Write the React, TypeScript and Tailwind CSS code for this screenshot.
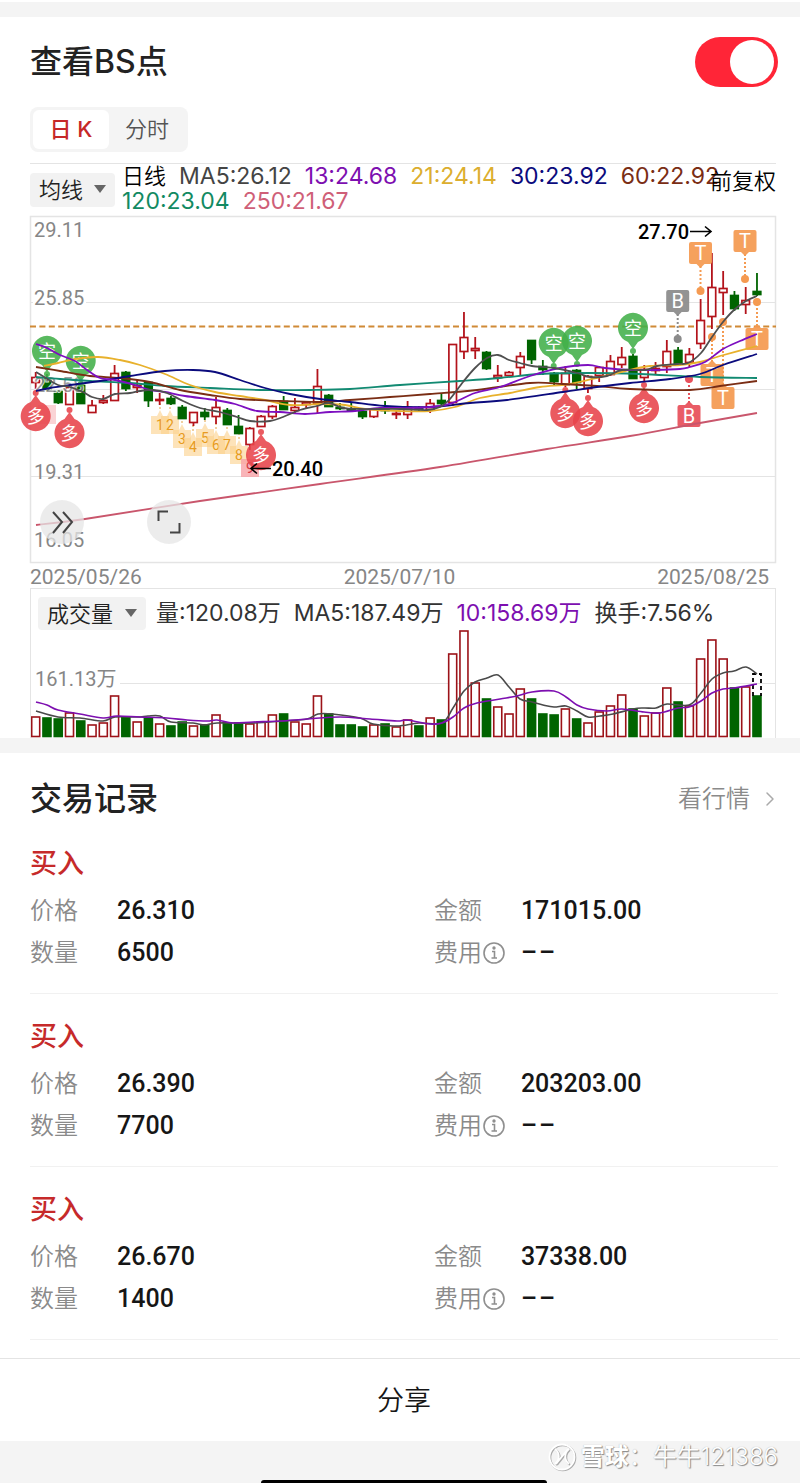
import { useState } from "react";
import { FiChevronRight } from "react-icons/fi";

type Candle = [
  kind: "u" | "d",
  high: number,
  top: number,
  bottom: number,
  low: number,
  volTop: number,
];
type Point = [number, number];

const STEP = 11.27;
const xAt = (i: number) => 35.7 + i * STEP;

const RED = "#b3131b";
const GREEN = "#006400";

const CANDLES: Candle[] = [
  ["u", 372, 377, 383, 389, 717],
  ["d", 374, 378, 390, 391, 718],
  ["d", 390, 391, 403, 404, 719],
  ["u", 384, 387, 405, 405, 713],
  ["d", 384, 385, 404, 404, 721],
  ["u", 400, 405, 413, 413, 725],
  ["u", 395, 400, 403, 404, 723],
  ["u", 365, 373, 401, 401, 696],
  ["d", 371, 372, 389, 391, 717],
  ["u", 380, 385, 388, 393, 722],
  ["d", 381, 382, 401, 407, 718],
  ["u", 393, 399, 401, 405, 724],
  ["d", 396, 398, 404, 405, 726],
  ["d", 405, 407, 419, 419, 722],
  ["u", 412, 412, 423, 426, 726],
  ["d", 408, 412, 417, 420, 725],
  ["u", 397, 407, 417, 424, 715],
  ["d", 408, 410, 425, 425, 723],
  ["d", 415, 426, 434, 434, 723],
  ["u", 427, 428, 445, 450, 724],
  ["u", 415, 416, 427, 427, 722],
  ["u", 405, 406, 417, 419, 715],
  ["d", 396, 401, 410, 410, 714],
  ["u", 398, 407, 411, 413, 722],
  ["u", 401, 402, 405, 408, 724],
  ["u", 369, 386, 404, 413, 696],
  ["d", 394, 395, 407, 407, 714],
  ["d", 403, 407, 409, 410, 725],
  ["d", 403, 409, 411, 412, 725],
  ["d", 410, 411, 417, 419, 727],
  ["u", 408, 409, 417, 418, 725],
  ["d", 401, 409, 411, 414, 724],
  ["u", 411, 413, 415, 419, 727],
  ["u", 401, 407, 415, 419, 720],
  ["d", 406, 407, 410, 411, 726],
  ["u", 399, 403, 410, 413, 718],
  ["d", 394, 400, 404, 405, 720],
  ["u", 344, 344, 403, 406, 654],
  ["u", 312, 337, 352, 359, 631],
  ["u", 337, 348, 351, 359, 683],
  ["d", 351, 352, 369, 370, 699],
  ["u", 365, 375, 378, 382, 707],
  ["u", 371, 372, 376, 376, 714],
  ["u", 352, 356, 368, 375, 689],
  ["d", 340, 340, 360, 364, 699],
  ["d", 360, 366, 370, 375, 714],
  ["d", 372, 373, 382, 386, 715],
  ["u", 366, 373, 385, 387, 709],
  ["d", 369, 370, 383, 389, 719],
  ["u", 375, 376, 389, 393, 723],
  ["u", 366, 367, 376, 382, 712],
  ["u", 355, 361, 375, 376, 706],
  ["u", 347, 357, 365, 368, 695],
  ["d", 354, 356, 379, 379, 709],
  ["u", 365, 369, 378, 381, 716],
  ["u", 362, 368, 371, 374, 713],
  ["u", 340, 351, 367, 373, 688],
  ["d", 347, 350, 364, 366, 702],
  ["u", 348, 354, 363, 367, 706],
  ["u", 299, 320, 344, 349, 659],
  ["u", 253, 287, 317, 329, 640],
  ["u", 271, 288, 293, 315, 659],
  ["d", 291, 295, 309, 311, 688],
  ["u", 287, 300, 305, 314, 687],
  ["d", 273, 291, 295, 296, 696],
];

const MA_LINES: { color: string; points: Point[] }[] = [
  {
    color: "#128a72",
    points: [[36, 377], [60, 379], [90, 381], [130, 383], [165, 386], [210, 388], [260, 390], [310, 390], [350, 389], [400, 385], [460, 381], [500, 378], [540, 374], [590, 373], [640, 374], [700, 377], [757, 378]],
  },
  {
    color: "#c9566c",
    points: [[36, 525], [85, 519], [200, 501], [320, 484], [440, 467], [547, 449], [630, 436], [700, 423], [757, 413]],
  },
  {
    color: "#e8b12c",
    points: [[44, 366], [58, 363], [75, 359], [98, 357], [120, 360], [140, 365], [165, 374], [190, 385], [215, 392], [240, 396], [265, 400], [290, 405], [320, 404], [345, 405], [365, 409], [400, 411], [430, 411], [455, 407], [480, 398], [510, 393], [540, 387], [570, 384], [600, 377], [625, 371], [650, 366], [680, 365], [700, 362], [720, 356], [757, 346]],
  },
  {
    color: "#7a2d14",
    points: [[36, 367], [60, 371], [90, 376], [120, 378], [150, 382], [180, 390], [210, 395], [240, 399], [280, 401], [320, 402], [350, 400], [390, 397], [430, 394], [477, 390], [530, 383], [563, 384], [597, 386], [630, 389], [690, 390], [720, 386], [757, 381]],
  },
  {
    color: "#0b0b7d",
    points: [[36, 391], [50, 388], [70, 385], [100, 381], [130, 376], [165, 371], [193, 370], [215, 372], [240, 380], [265, 388], [290, 394], [320, 399], [350, 402], [385, 406], [430, 407], [470, 403], [507, 400], [563, 392], [597, 387], [630, 383], [670, 379], [700, 374], [723, 365], [757, 354]],
  },
  {
    color: "#7d0fc0",
    points: [[36, 344], [47, 348], [60, 355], [75, 361], [87, 370], [100, 378], [115, 380], [135, 385], [150, 390], [165, 392], [185, 396], [215, 400], [235, 404], [257, 411], [280, 412], [305, 414], [330, 412], [355, 411], [380, 408], [410, 408], [440, 406], [455, 402], [475, 393], [500, 387], [530, 376], [560, 368], [588, 365], [605, 368], [630, 370], [655, 370], [680, 369], [690, 367], [705, 362], [723, 349], [740, 341], [757, 334]],
  },
  {
    color: "#4f4f4f",
    points: [[36, 372], [46, 378], [58, 385], [70, 387], [83, 392], [92, 397], [103, 399], [115, 394], [130, 393], [140, 391], [153, 390], [167, 393], [183, 401], [200, 408], [220, 412], [237, 417], [250, 421], [270, 421], [283, 417], [300, 410], [317, 406], [329, 403], [343, 408], [360, 409], [400, 409], [427, 410], [440, 407], [450, 399], [463, 382], [475, 368], [487, 358], [498, 355], [509, 360], [520, 363], [532, 366], [554, 368], [577, 373], [590, 377], [607, 376], [622, 370], [645, 370], [657, 366], [677, 364], [688, 363], [701, 353], [712, 337], [723, 322], [734, 310], [746, 301], [757, 296]],
  },
];

const VOL_MA5: Point[] = [[36, 711], [58, 717], [80, 718], [103, 721], [115, 717], [137, 717], [148, 716], [160, 716], [171, 722], [193, 723], [205, 725], [217, 723], [253, 723], [283, 721], [307, 719], [318, 714], [332, 714], [360, 718], [373, 724], [397, 726], [419, 723], [442, 723], [453, 708], [464, 691], [475, 682], [487, 678], [498, 675], [509, 687], [520, 699], [532, 702], [543, 705], [554, 707], [566, 706], [577, 711], [588, 717], [600, 716], [613, 714], [633, 709], [644, 708], [656, 708], [667, 704], [689, 705], [701, 693], [712, 679], [723, 673], [734, 671], [746, 667], [757, 674]];
const VOL_MA10: Point[] = [[36, 702], [47, 705], [58, 710], [80, 714], [103, 718], [117, 716], [140, 717], [167, 718], [187, 720], [207, 721], [217, 720], [233, 723], [253, 722], [280, 721], [307, 719], [340, 717], [370, 719], [397, 721], [407, 720], [430, 724], [442, 723], [453, 717], [464, 708], [477, 703], [500, 699], [517, 696], [532, 692], [554, 691], [566, 697], [577, 705], [588, 709], [607, 711], [622, 709], [644, 712], [660, 713], [678, 708], [689, 707], [701, 701], [712, 693], [723, 689], [734, 688], [757, 684]];

const COUNTS = [
  [160, 425], [170, 425], [182, 439], [193, 447], [205, 438], [216, 445], [227, 445], [239, 455],
];

const SHORT_PINS = [[47, 351], [80.7, 361], [553.7, 343], [577, 341], [633, 328]];
const LONG_PINS = [[35.7, 416], [69.5, 433], [261, 455], [565.3, 413], [588, 421], [644, 408]];

const TRADES = [
  { price: "26.310", amount: "171015.00", qty: "6500" },
  { price: "26.390", amount: "203203.00", qty: "7700" },
  { price: "26.670", amount: "37338.00", qty: "1400" },
];

const FONT = "font-['Inter','Noto_Sans_CJK_SC',sans-serif]";
const NUM = "font-['Roboto','Noto_Sans_CJK_SC',sans-serif]";

// Catmull-Rom spline through the points
function smooth(p: Point[]) {
  let d = `M${p[0][0]} ${p[0][1]}`;
  for (let i = 0; i < p.length - 1; i++) {
    const a = p[i - 1] ?? p[i];
    const b = p[i];
    const c = p[i + 1];
    const e = p[i + 2] ?? c;
    d += `C${b[0] + (c[0] - a[0]) / 6} ${b[1] + (c[1] - a[1]) / 6} ${c[0] - (e[0] - b[0]) / 6} ${c[1] - (e[1] - b[1]) / 6} ${c[0]} ${c[1]}`;
  }
  return d;
}

function Pin({ x, y, up, color, label }: { x: number; y: number; up?: boolean; color: string; label: string }) {
  const s = up ? -1 : 1;
  return (
    <g>
      <g fill={color} opacity={0.88}>
        <path
          d={`M${x} ${y + 21 * s}L${x - 5} ${y + 14 * s}A15 15 0 1 ${up ? 0 : 1} ${x + 5} ${y + 14 * s}Z`}
        />
        <circle cx={x} cy={y + 23 * s} r={3} />
      </g>
      <text x={x} y={y + 7} textAnchor="middle" fontSize={18} fill="#fff">
        {label}
      </text>
    </g>
  );
}

function Badge({ x, y, dot, color, label }: { x: number; y: number; dot: number; color: string; label: string }) {
  const s = dot > y ? 1 : -1;
  return (
    <g>
      <line x1={x} x2={x} y1={y + 13 * s} y2={dot} stroke={color} strokeWidth={2} strokeDasharray="2 2" />
      <circle cx={x} cy={dot} r={4} fill={color} />
      <g fill={color} opacity={0.93}>
        <rect x={x - 11.5} y={y - 11} width={23} height={22} rx={2} />
        <path d={`M${x - 4} ${y + 11 * s}h8l-4 ${4 * s}z`} />
      </g>
      <text x={x} y={y + 7} textAnchor="middle" fontSize={20} fill="#fff">
        {label}
      </text>
    </g>
  );
}

function PriceChart() {
  return (
    <svg viewBox="30 216 746 348" className={`block w-full overflow-visible font-normal ${NUM}`}>
      <g stroke="#e4e4e4" fill="none">
        <rect x={30.5} y={216.5} width={745} height={346} strokeWidth={1.5} />
        <path d="M30 302.5H776M30 389.5H776M30 476.5H776" />
      </g>
      <g fontSize={20} fill="#868686">
        <rect x={33} y={292} width={53} height={20} fill="#fff" />
        <text x={34} y={237}>29.11</text>
        <text x={34} y={305}>25.85</text>
        <text x={34} y={479}>19.31</text>
        <text x={34} y={547}>16.05</text>
      </g>
      <path d="M30 326.5H776" stroke="#d08a36" strokeWidth={2} strokeDasharray="6 3.4" />
      <rect x={38} y={405} width={18} height={19} fill="#f7b5b9" opacity={0.6} />
      {COUNTS.map(([x, y], i) => (
        <g key={i}>
          <path
            d={`M${x - 9} ${y - 9}h6l3 -6l3 6h6v18h-18z`}
            fill="#fbd08a"
            opacity={0.6}
          />
          <path d={`M${x} ${y - 22}v8`} stroke="#e0a040" strokeDasharray="2 2" />
          <text x={x} y={y + 5} textAnchor="middle" fontSize={14} fill="#e79b20">
            {i + 1}
          </text>
        </g>
      ))}
      <rect x={241} y={459} width={18} height={18} fill="#f7a1a6" opacity={0.8} />
      <text x={250} y={473} textAnchor="middle" fontSize={14} fill="#d33a44">
        9
      </text>
      {CANDLES.map(([kind, high, top, bottom, low], i) => {
        const x = xAt(i);
        const up = kind === "u";
        const color = up ? RED : GREEN;
        return (
          <g key={i} stroke={color}>
            <path d={`M${x} ${high}V${top}M${x} ${bottom}V${low}`} strokeWidth={1.8} />
            <rect
              x={x - 3.8}
              y={top + 0.5}
              width={7.6}
              height={Math.max(bottom - top - 1, 1)}
              fill={up ? "#fff" : color}
              strokeWidth={1.7}
            />
          </g>
        );
      })}
      <text x={34} y={392} fontSize={20} fill="#868686" stroke="#fff" strokeWidth={2} paintOrder="stroke" opacity={0.8}>
        22.58
      </text>
      {SHORT_PINS.map(([x, y]) => (
        <Pin key={x} x={x} y={y} color="#43b04a" label="空" />
      ))}
      {LONG_PINS.map(([x, y]) => (
        <Pin key={x} x={x} y={y} up color="#e8444b" label="多" />
      ))}
      <Badge x={700.5} y={253} dot={291} color="#f59a51" label="T" />
      <Badge x={745} y={241} dot={279} color="#f59a51" label="T" />
      <Badge x={712} y={375} dot={337} color="#f59a51" label="T" />
      <Badge x={723} y={398} dot={322} color="#f59a51" label="T" />
      <Badge x={757} y={339} dot={302} color="#f59a51" label="T" />
      <Badge x={677.7} y={301} dot={339} color="#8b8b8b" label="B" />
      <Badge x={689} y={416} dot={379} color="#e8505b" label="B" />
      {MA_LINES.map((l) => (
        <path key={l.color} d={smooth(l.points)} fill="none" stroke={l.color} strokeWidth={1.8} />
      ))}
      <g fontSize={20} fontWeight={500} fill="#000">
        <text x={638} y={239}>27.70</text>
        <text x={272} y={476}>20.40</text>
      </g>
      <path
        d="M690 231.5H711M705 226.5L711 231.5L705 236.5M271 468.5H251M257 463.5L251 468.5L257 473.5"
        fill="none"
        stroke="#000"
        strokeWidth={1.6}
      />
    </svg>
  );
}

function VolumeChart() {
  return (
    <svg viewBox="31 630 744 108" className={`block w-full font-normal ${NUM}`}>
      <path d="M120 683.5H776" stroke="#e4e4e4" />
      <text x={35} y={686} fontSize={20} fill="#868686">
        161.13万
      </text>
      {CANDLES.map(([kind, , , , , top], i) => (
        <rect
          key={i}
          x={xAt(i) - 4}
          y={top}
          width={8}
          height={736.5 - top}
          fill={kind === "u" ? "#fff" : GREEN}
          stroke={kind === "u" ? "#9c1218" : GREEN}
          strokeWidth={1.6}
        />
      ))}
      <path d="M753 696V674H761V696" fill="none" stroke="#000" strokeWidth={1.8} strokeDasharray="4 3" />
      <g fill="none" strokeWidth={1.6}>
        <path d={smooth(VOL_MA5)} stroke="#4a4a4a" />
        <path d={smooth(VOL_MA10)} stroke="#7d0fb0" />
      </g>
    </svg>
  );
}

function Dropdown({ label, className }: { label: string; className: string }) {
  return (
    <div className={`relative shrink-0 ${className}`}>
      <select
        aria-label={label}
        className="h-full w-full appearance-none rounded-sm bg-[#f2f2f2] pl-[9px] text-[22px] leading-8 text-[#222]"
      >
        <option>{label}</option>
      </select>
      <svg viewBox="0 0 12 8" className="pointer-events-none absolute right-[9px] top-3 h-2 w-3">
        <path d="M0 0h12L6 8z" fill="#666" />
      </svg>
    </div>
  );
}

function InfoIcon() {
  return (
    <svg viewBox="0 0 24 24" className="h-6 w-6" fill="none" stroke="#8f8f8f" strokeWidth={1.6}>
      <circle cx={12} cy={12} r={10} />
      <path d="M10 10.5h2.5v6.5M9.5 17h5.5" />
      <circle cx={12} cy={7} r={0.9} fill="#8f8f8f" />
    </svg>
  );
}

function Field({ label, value, info }: { label: string; value: string; info?: boolean }) {
  return (
    <div className="flex items-center">
      <dt className="flex w-[87px] shrink-0 items-center text-2xl leading-[42px] text-[#8a8a8a]">
        {label}
        {info && (
          <button aria-label="费用说明">
            <InfoIcon />
          </button>
        )}
      </dt>
      <dd className={`text-[25px] font-medium leading-[42px] text-[#161616] ${NUM}`}>
        {value === "--" ? (
          <span className="flex gap-[2px]" aria-label="--">
            <span aria-hidden="true">–</span>
            <span aria-hidden="true">–</span>
          </span>
        ) : (
          value
        )}
      </dd>
    </div>
  );
}

export default function App() {
  const [showBS, setShowBS] = useState(true);
  const [tab, setTab] = useState("day");

  return (
    <div className={`w-full bg-white font-[350] text-[#222] ${FONT}`}>
      <div className="mt-[2px] h-[15px] bg-[#f4f4f4]" />

      {/* BS chart */}
      <section className="pl-[30px] pr-6">
        <label className="-mr-[2px] flex h-[90px] items-center justify-between">
          <span className="text-[32px] font-medium leading-10">查看BS点</span>
          <input
            type="checkbox"
            role="switch"
            checked={showBS}
            onChange={(e) => setShowBS(e.target.checked)}
            className="relative h-[50px] w-[83px] appearance-none rounded-full bg-[#ddd] before:absolute before:left-1 before:top-[3px] before:h-11 before:w-11 before:rounded-full before:bg-white checked:bg-[#ff2537] checked:before:left-[35px]"
          />
        </label>

        <div className="flex h-[45px] w-[158px] rounded-lg bg-[#f4f4f4] p-[3px] text-[22px]">
          <button
            onClick={() => setTab("day")}
            className={`w-[76px] rounded-md ${tab === "day" ? "bg-white font-medium text-[#c62828]" : "text-[#555]"}`}
          >
            日 K
          </button>
          <button
            onClick={() => setTab("minute")}
            className={`w-[76px] rounded-md ${tab === "minute" ? "bg-white font-medium text-[#c62828]" : "text-[#555]"}`}
          >
            分时
          </button>
        </div>

        <div className="mt-[11px] flex h-[53px] border-t border-[#e4e4e4]">
          <Dropdown label="均线" className="mt-[9px] h-[34px] w-[85px]" />
          <div className="ml-[7px] min-w-0 flex-1 whitespace-nowrap text-[23px] font-normal leading-[25px]">
            <div className="flex gap-[13px]">
              <span className="text-[22px] font-[350] text-black">日线</span>
              <span className="text-[#444]">MA5:26.12</span>
              <span className="text-[#7d0fb0]">13:24.68</span>
              <span className="text-[#dcae2f]">21:24.14</span>
              <span className="text-[#0b0b7d]">30:23.92</span>
              <span className="text-[#7a2d14]">60:22.92</span>
            </div>
            <div className="flex gap-[13px]">
              <span className="text-[#128a62]">120:23.04</span>
              <span className="text-[#cf5f78]">250:21.67</span>
            </div>
          </div>
          <span className="shrink-0 pt-1 text-[22px] leading-[26px] text-black">前复权</span>
        </div>

        <div className="relative">
          <PriceChart />
          <button
            aria-label="展开"
            className="absolute bottom-5 left-[10px] h-11 w-11 rounded-full bg-[#e6e6e6]/75"
          >
            <svg viewBox="0 0 44 44" fill="none" stroke="#444" strokeWidth={2}>
              <path d="M13 12L22 22L13 33M23 12L32 22L23 33" />
            </svg>
          </button>
          <button
            aria-label="全屏"
            className="absolute bottom-5 left-[117px] h-11 w-11 rounded-full bg-[#e6e6e6]/75"
          >
            <svg viewBox="0 0 44 44" fill="none" stroke="#444" strokeWidth={2}>
              <path d="M11.5 21V11.5H21M23 32.5H32.5V23" />
            </svg>
          </button>
        </div>

        <div className={`flex h-6 items-center justify-between pr-[7px] pt-[3px] text-[21px] font-normal text-[#868686] ${NUM}`}>
          <span>2025/05/26</span>
          <span>2025/07/10</span>
          <span>2025/08/25</span>
        </div>

        <div className="border-x border-t border-[#e4e4e4]">
          <div className="flex h-[41px] items-start gap-[10px] whitespace-nowrap pl-[7px] pt-2">
            <Dropdown label="成交量" className="h-[33px] w-[108px]" />
            <div className="flex gap-[13px] text-[23px] leading-[33px] text-[#333]">
              <span className="font-normal">量:120.08万</span>
              <span className="font-normal">MA5:187.49万</span>
              <span className="font-normal text-[#7d0fb0]">10:158.69万</span>
              <span className="font-normal">换手:7.56%</span>
            </div>
          </div>
          <VolumeChart />
        </div>
      </section>

      <div className="h-[15px] bg-[#f4f4f4]" />

      {/* Trades */}
      <section className="pl-[30px] pr-[22px]">
        <div className="flex h-[92px] items-center justify-between">
          <h2 className="text-[32px] font-medium leading-10">交易记录</h2>
          <a href="#quote" className="flex items-center gap-2 text-2xl text-[#8a8a8a]">
            看行情
            <FiChevronRight size={24} strokeWidth={1.5} className="-mr-1 text-[#aaa]" />
          </a>
        </div>
        {TRADES.map((t) => (
          <article key={t.price} className="mb-6 h-[149px] border-b border-[#f1f1f1]">
            <h3 className="text-[27px] font-medium leading-[38px] text-[#c62a2a]">买入</h3>
            <dl className="mt-[7px] grid grid-cols-[54%_1fr]">
              <Field label="价格" value={t.price} />
              <Field label="金额" value={t.amount} />
              <Field label="数量" value={t.qty} />
              <Field label="费用" value="--" info />
            </dl>
          </article>
        ))}
      </section>

      <button className="-mt-[6px] block h-[83px] w-full border-t border-[#e4e4e4] pl-2 pt-[2px] text-[27px] text-[#161616]">
        分享
      </button>

      <footer className="bg-[#f4f4f4] pl-2">
        <div className="flex h-[39px] items-start justify-end gap-1 pr-[22px] text-2xl leading-8 text-white [text-shadow:1px_1px_1px_#888,0_0_1px_#aaa]">
          <svg viewBox="0 0 30 30" className="mt-px h-[30px] w-[30px]" fill="none">
            <g stroke="#aaa" strokeWidth={2}>
              <circle cx={15.8} cy={15.8} r={12.5} />
              <path d="M9 8c5 4 5 11 0 15M23 8c-5 4-5 11 0 15M22 8L10 23" />
            </g>
            <g stroke="#fff" strokeWidth={1.8}>
              <circle cx={15} cy={15} r={12.5} />
              <path d="M8 7c5 4 5 11 0 15M22 7c-5 4-5 11 0 15M21 7L9 22" />
            </g>
          </svg>
          <span>
            <b className="font-bold">雪球</b>：牛牛121386
          </span>
        </div>
        <div className="mx-auto h-[3px] w-[36%] rounded-t-full bg-black" />
      </footer>
    </div>
  );
}
